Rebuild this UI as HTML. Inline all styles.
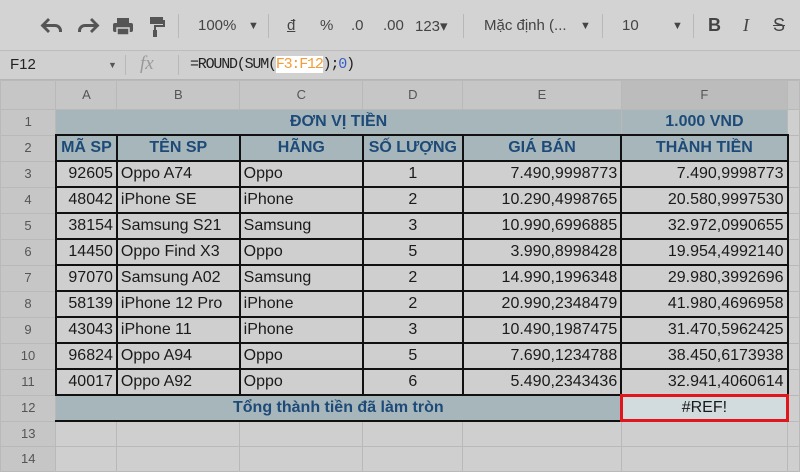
<!DOCTYPE html>
<html><head><meta charset="utf-8"><style>
body{margin:0;width:800px;height:450px;overflow:hidden;background:#cfcfcf;font-family:"Liberation Sans",Arial,sans-serif;position:relative}
.tb{position:absolute;left:0;top:0;width:800px;height:50px;background:#d3d3d3;border-bottom:1px solid #bdbdbd}
.tb span{position:absolute;top:17px;font-size:15px;color:#444}
.sep{position:absolute;top:14px;width:1px;height:24px;background:#b8b8b8}
.fb{position:absolute;left:0;top:51px;width:800px;height:28px;background:#d0d0d0;border-bottom:1px solid #b5b5b5}
table{position:absolute;left:0;top:80px;border-collapse:collapse;table-layout:fixed}
td{border:1px solid #b9b9b9;height:24px;padding:0 3px;font-size:16px;color:#1a1a1a;white-space:nowrap;overflow:hidden;line-height:20px}
tr.h td{height:28px;background:#c6c6c6;color:#555;font-size:13px;text-align:center}
td.n{background:#c6c6c6;color:#555;font-size:13px;text-align:center}
td.hd{background:#a7b6ba;color:#1d4a78;font-weight:bold;text-align:center;font-size:16px}
.d td.c{border:2px solid #111}
.r{text-align:right}.m{text-align:center}
</style></head><body>
<div class="tb">
<svg style="position:absolute;left:40px;top:14px" width="130" height="24" viewBox="0 0 130 24" fill="#555">
<path d="M6 10h9a7 7 0 0 1 7 7v1h-3v-1a4 4 0 0 0-4-4H6l4 4-2 2-7.5-7.5L8 4l2 2z"/>
<path d="M54 10h-9a7 7 0 0 0-7 7v1h3v-1a4 4 0 0 1 4-4h9l-4 4 2 2 7.5-7.5L52 4l-2 2z"/>
<rect x="77" y="4" width="12" height="5"/><rect x="73" y="9" width="20" height="9" rx="2"/><rect x="77" y="14" width="12" height="7" fill="#555" stroke="#d3d3d3" stroke-width="1.5"/>
<path d="M110 3h13v7h-13zM123 6h2v7h-9v3h-2v-5h9zM113 16h4v7h-4z"/>
</svg>
<div class="sep" style="left:178px"></div>
<span style="left:198px">100%</span><span style="left:248px;font-size:11px;top:20px">▼</span>
<div class="sep" style="left:268px"></div>
<span style="left:287px;text-decoration:underline">đ</span><span style="left:320px">%</span><span style="left:351px">.0</span><span style="left:383px">.00</span><span style="left:415px">123▾</span>
<div class="sep" style="left:463px"></div>
<span style="left:484px">Mặc định (...</span><span style="left:580px;font-size:11px;top:20px">▼</span>
<div class="sep" style="left:602px"></div>
<span style="left:622px">10</span><span style="left:672px;font-size:11px;top:20px">▼</span>
<div class="sep" style="left:693px"></div>
<span style="left:708px;font-weight:bold;font-size:18px;top:15px">B</span><span style="left:743px;font-style:italic;font-size:18px;top:15px;font-family:'Liberation Serif'">I</span><span style="left:773px;text-decoration:line-through;font-size:18px;top:15px">S</span>
</div>
<div class="fb">
<span style="position:absolute;left:10px;top:5px;font-size:15px;color:#222">F12</span>
<span style="position:absolute;left:108px;top:9px;font-size:9px;color:#555">▼</span>
<div class="sep" style="left:125px;top:4px;height:20px"></div>
<span style="position:absolute;left:140px;top:2px;font-size:19px;color:#999;font-style:italic;font-family:'Liberation Serif'">fx</span>
<div class="sep" style="left:178px;top:4px;height:20px"></div>
<span style="position:absolute;left:190px;top:5px;font-size:15px;font-family:'Liberation Mono',monospace;letter-spacing:-1.2px;color:#222">=ROUND(SUM(<span style="background:#fff;color:#f39c3a">F3:F12</span>);<span style="color:#3a5ec7">0</span>)</span>
</div>
<table>
<colgroup><col style="width:56px"><col style="width:61px"><col style="width:123px"><col style="width:124px"><col style="width:100px"><col style="width:159px"><col style="width:167px"><col style="width:12px"></colgroup>
<tr class="h"><td></td><td>A</td><td>B</td><td>C</td><td>D</td><td>E</td><td style="background:#bcbcbc">F</td><td></td></tr>
<tr><td class="n">1</td><td class="hd" colspan="5">ĐƠN VỊ TIỀN</td><td class="hd">1.000 VND</td><td></td></tr>
<tr class="d"><td class="n">2</td><td class="hd c">MÃ SP</td><td class="hd c">TÊN SP</td><td class="hd c">HÃNG</td><td class="hd c">SỐ LƯỢNG</td><td class="hd c">GIÁ BÁN</td><td class="hd c">THÀNH TIỀN</td><td></td></tr>
<tr class="d"><td class="n">3</td><td class="c r">92605</td><td class="c">Oppo A74</td><td class="c">Oppo</td><td class="c m">1</td><td class="c r">7.490,9998773</td><td class="c r">7.490,9998773</td><td></td></tr>
<tr class="d"><td class="n">4</td><td class="c r">48042</td><td class="c">iPhone SE</td><td class="c">iPhone</td><td class="c m">2</td><td class="c r">10.290,4998765</td><td class="c r">20.580,9997530</td><td></td></tr>
<tr class="d"><td class="n">5</td><td class="c r">38154</td><td class="c">Samsung S21</td><td class="c">Samsung</td><td class="c m">3</td><td class="c r">10.990,6996885</td><td class="c r">32.972,0990655</td><td></td></tr>
<tr class="d"><td class="n">6</td><td class="c r">14450</td><td class="c">Oppo Find X3</td><td class="c">Oppo</td><td class="c m">5</td><td class="c r">3.990,8998428</td><td class="c r">19.954,4992140</td><td></td></tr>
<tr class="d"><td class="n">7</td><td class="c r">97070</td><td class="c">Samsung A02</td><td class="c">Samsung</td><td class="c m">2</td><td class="c r">14.990,1996348</td><td class="c r">29.980,3992696</td><td></td></tr>
<tr class="d"><td class="n">8</td><td class="c r">58139</td><td class="c">iPhone 12 Pro</td><td class="c">iPhone</td><td class="c m">2</td><td class="c r">20.990,2348479</td><td class="c r">41.980,4696958</td><td></td></tr>
<tr class="d"><td class="n">9</td><td class="c r">43043</td><td class="c">iPhone 11</td><td class="c">iPhone</td><td class="c m">3</td><td class="c r">10.490,1987475</td><td class="c r">31.470,5962425</td><td></td></tr>
<tr class="d"><td class="n">10</td><td class="c r">96824</td><td class="c">Oppo A94</td><td class="c">Oppo</td><td class="c m">5</td><td class="c r">7.690,1234788</td><td class="c r">38.450,6173938</td><td></td></tr>
<tr class="d"><td class="n">11</td><td class="c r">40017</td><td class="c">Oppo A92</td><td class="c">Oppo</td><td class="c m">6</td><td class="c r">5.490,2343436</td><td class="c r">32.941,4060614</td><td></td></tr>
<tr class="d"><td class="n">12</td><td class="hd c" colspan="5" style="border-left:1px solid #b9b9b9;border-right:1px solid #b9b9b9">Tổng thành tiền đã làm tròn</td><td style="background:#d2dcde;text-align:center;outline:3px solid #e0161c;outline-offset:-2px;border:2px solid #2a6fd6">#REF!</td><td></td></tr>
<tr><td class="n">13</td><td></td><td></td><td></td><td></td><td></td><td></td><td></td></tr>
<tr><td class="n">14</td><td></td><td></td><td></td><td></td><td></td><td></td><td></td></tr>
</table>
</body></html>
